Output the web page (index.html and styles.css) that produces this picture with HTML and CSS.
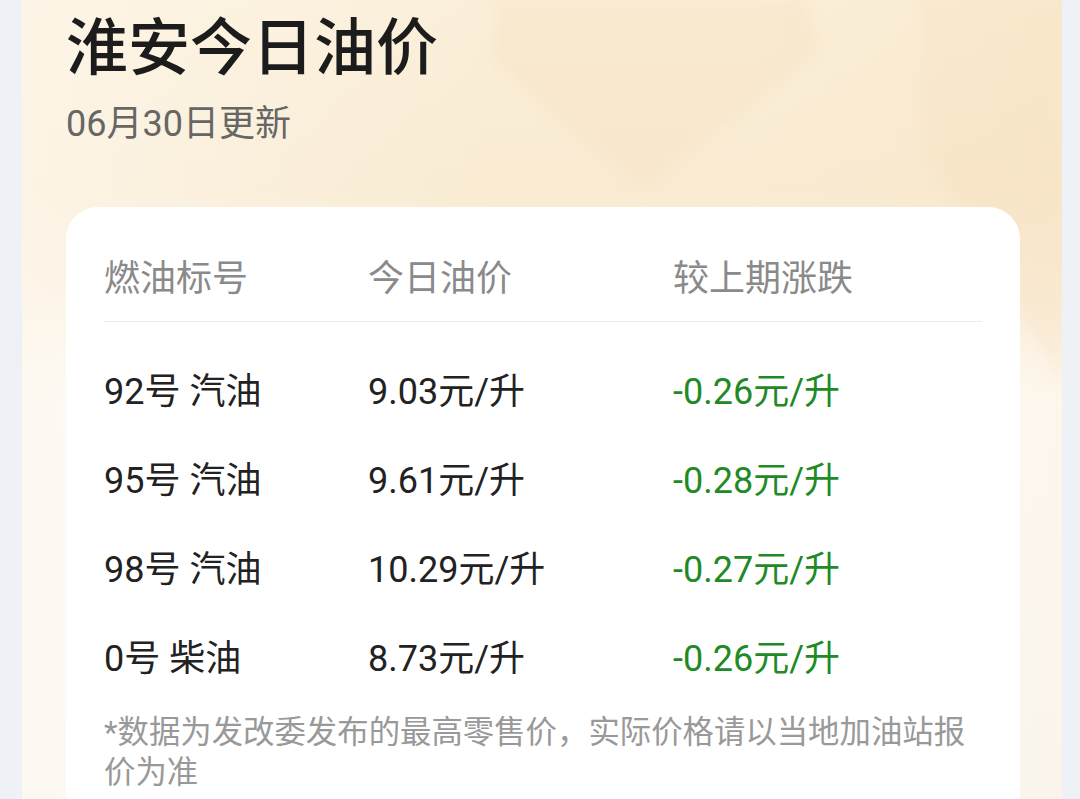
FILE: index.html
```html
<!DOCTYPE html>
<html lang="zh-CN">
<head>
<meta charset="utf-8">
<title>淮安今日油价</title>
<link rel="stylesheet" href="styles.css">
</head>
<body>
<div class="page">
  <section class="panel">
    <div class="deco" aria-hidden="true">
      <svg width="1040" height="420" viewBox="0 0 1040 420">
        <polygon points="480,-60 760,-60 800,50 620,190 470,60" fill="#f7dfbd" opacity="0.35"/>
        <polygon points="900,-20 1040,-20 1040,380 970,260 900,150" fill="#f6dcb8" opacity="0.25"/>
      </svg>
    </div>
    <h1 class="title">淮安今日油价</h1>
    <p class="subtitle">06月30日更新</p>
    <div class="card">
      <div class="row head">
        <span>燃油标号</span>
        <span>今日油价</span>
        <span>较上期涨跌</span>
      </div>
      <div class="rows">
        <div class="row"><span>92号 汽油</span><span>9.03元/升</span><span class="down">-0.26元/升</span></div>
        <div class="row"><span>95号 汽油</span><span>9.61元/升</span><span class="down">-0.28元/升</span></div>
        <div class="row"><span>98号 汽油</span><span>10.29元/升</span><span class="down">-0.27元/升</span></div>
        <div class="row"><span>0号 柴油</span><span>8.73元/升</span><span class="down">-0.26元/升</span></div>
      </div>
      <p class="note">*数据为发改委发布的最高零售价，实际价格请以当地加油站报价为准</p>
    </div>
  </section>
</div>
</body>
</html>
```

FILE: styles.css
```css
html, body {
  margin: 0;
  padding: 0;
}
body {
  background: #eef2f7;
  font-family: Roboto, "Noto Sans CJK SC", "Noto Sans", sans-serif;
  width: 1080px;
  height: 799px;
  overflow: hidden;
}
.page {
  padding: 0 18px 0 22px;
  height: 799px;
}
.panel {
  position: relative;
  height: 100%;
  padding: 12px 42px 0 44px;
  box-sizing: border-box;
  background:
    linear-gradient(90deg, rgba(253,247,236,0.7) 0, rgba(253,247,236,0) 45%, rgba(246,228,196,0.0) 70%, rgba(246,226,190,0.3) 100%),
    linear-gradient(180deg, #fbefd9 0, #f9ebd2 190px, #fbf1e2 300px, #fefbf6 360px, #ffffff 400px, #fcfcfd 100%);
  overflow: hidden;
}
.deco {
  position: absolute;
  left: 0;
  top: 0;
  pointer-events: none;
}
.deco svg { display: block; filter: blur(6px); }
.title {
  position: relative;
  margin: 0;
  font-size: 62px;
  line-height: 74px;
  font-weight: 500;
  color: #1c1c1c;
}
.subtitle {
  position: relative;
  margin: 16px 0 0;
  font-size: 36px;
  line-height: 44px;
  color: #666;
}
.card {
  position: relative;
  margin-top: 61px;
  background: #fff;
  border-radius: 32px 32px 0 0;
  padding: 32px 38px 0 38px;
  min-height: 600px;
}
.row {
  display: grid;
  grid-template-columns: 264px 305px 1fr;
  font-size: 36px;
  height: 89px;
  align-items: center;
  color: #222;
  white-space: nowrap;
}
.row.head {
  height: 72px;
  padding-bottom: 10px;
  border-bottom: 1px solid #ececec;
  color: #8a8a8a;
}
.rows {
  padding-top: 21px;
}
.down {
  color: #1f8a26;
}
.note {
  margin: 14px 0 0;
  font-size: 31.4px;
  line-height: 40px;
  color: #999;
}
```
